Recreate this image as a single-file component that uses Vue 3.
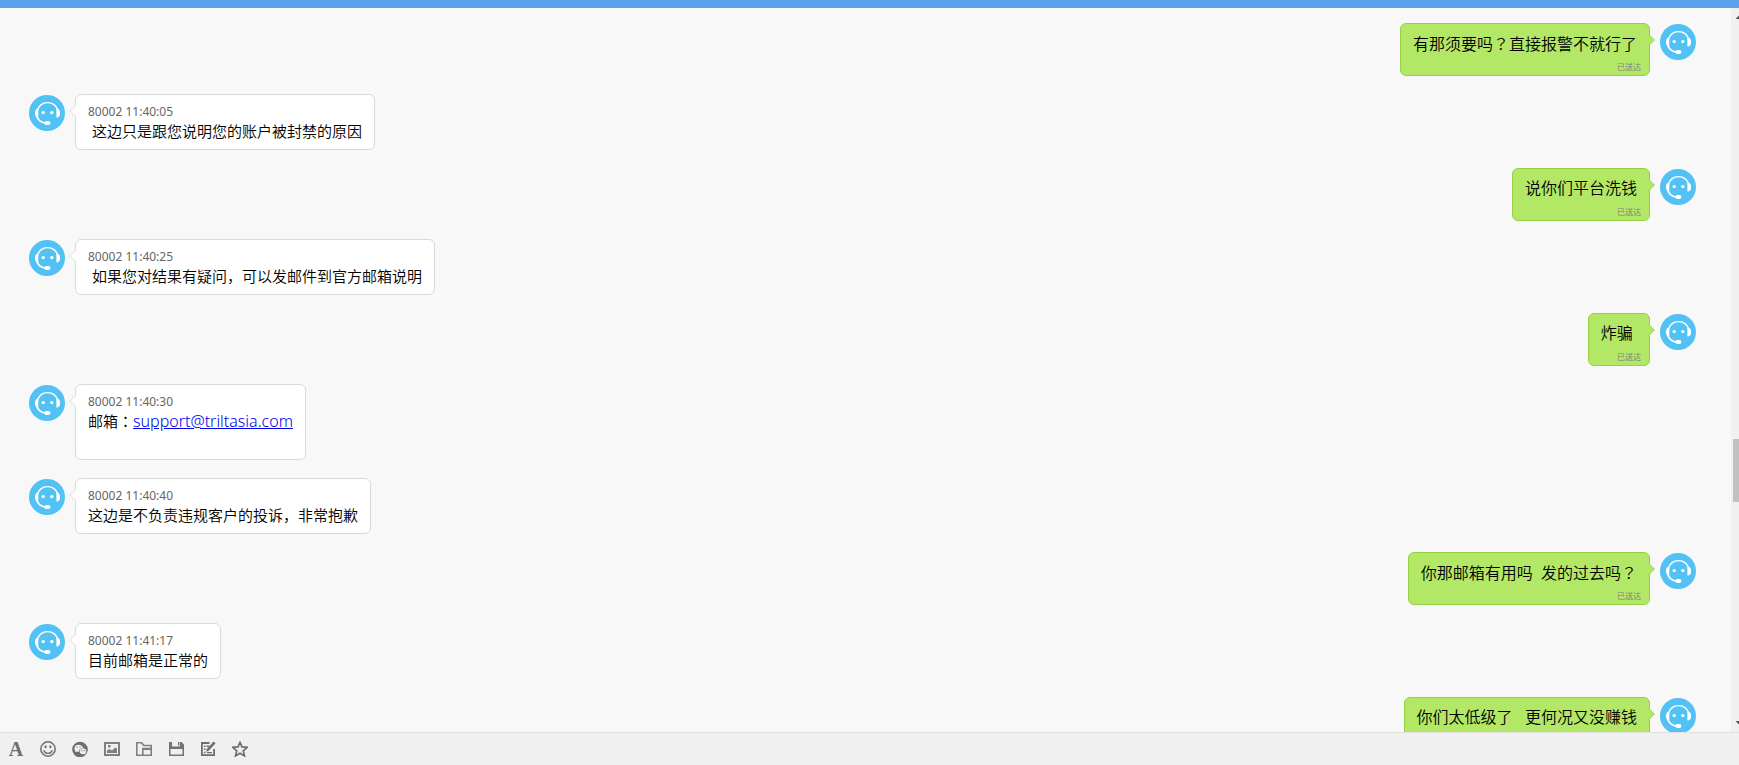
<template>
  <div class="chat">
    <header class="top-bar"></header>

    <div class="body">
      <main class="messages">
        <div v-for="msg in messages" :key="msg.id" class="row" :class="{ mine: msg.mine }">
          <svg class="avatar" viewBox="0 0 36 36" aria-hidden="true">
            <circle cx="18" cy="18" r="18" fill="#52c1f3" />
            <g fill="none" stroke="#fff" stroke-linecap="round">
              <path d="M8.4 16C9.2 10.8 13.4 7.6 18.6 7.6S28 10.8 28.8 16" stroke-width="1.4" />
              <path d="M7.8 21.500C9.200 25 12.600 27.600 17 28.200" stroke-width="1.800" />
            </g>
            <g fill="#fff">
              <path d="M9.3 13.4v9.2C7 22.6 6 20.8 6 18s1-4.6 3.3-4.6z" />
              <path d="M27.4 13.4c2.7 0 3.7 1.800 3.700 4.600s-1 4.600-3.700 4.600z" />
              <circle cx="14.2" cy="17.6" r="1.7" />
              <circle cx="22.8" cy="17.6" r="1.7" />
              <rect x="15.4" y="26" width="6" height="4" rx="2" />
            </g>
          </svg>

          <div class="bubble">
            <p v-if="!msg.mine" class="meta">{{ msg.from }} {{ msg.time }}</p>
            <p class="text"><span v-for="(part, i) in splitMarks(msg.text)" :key="i" :class="{ mark: i % 2 }">{{ part }}</span><a v-if="msg.mail" :href="'mailto:' + msg.mail">{{ msg.mail }}</a></p>
            <p v-if="msg.mail" class="text"></p>
            <p v-if="msg.delivered" class="status">已送达</p>
          </div>
        </div>
      </main>

      <div class="scrollbar" aria-hidden="true">
        <svg class="arrow" viewBox="0 0 17 17"><path d="M4.5 11l4-4 4 4z" fill="#505050" /></svg>
        <div :style="{ flexGrow: scrolled }"></div>
        <div class="thumb"></div>
        <div :style="{ flexGrow: 100 - scrolled }"></div>
        <svg class="arrow" viewBox="0 0 17 17"><path d="M4.5 6l4 4 4-4z" fill="#505050" /></svg>
      </div>
    </div>

    <footer class="toolbar">
      <button type="button" aria-label="字体" class="font">A</button>
      <button type="button" aria-label="表情">
        <svg viewBox="0 0 16 16">
          <circle cx="8" cy="8" r="7.2" fill="none" stroke="#6e6e6e" stroke-width="1.5" />
          <ellipse cx="5.6" cy="5.8" rx="1.1" ry="1.5" />
          <ellipse cx="10.4" cy="5.8" rx="1.1" ry="1.5" />
          <path d="M3.8 9.2c1.2 4.2 7.2 4.2 8.4 0" fill="none" stroke="#6e6e6e" stroke-width="1.4" />
        </svg>
      </button>
      <button type="button" aria-label="微信表情">
        <svg viewBox="0 0 16 16">
          <circle cx="8" cy="8.5" r="7.8" />
          <path d="M2.400 7.400C2.400 5.200 4.200 3.800 6.500 3.800s4.200 1.300 4.500 3.200C8.500 7 6.800 8.600 6.900 10.700c-.9.1-1.600 0-2.300-.2L3 11.300l.3-1.500c-.6-.6-.9-1.500-.9-2.400z" fill="#f0f0f0" />
          <path d="M7.600 10.300c0-1.800 1.600-3 3.400-3s3.300 1.300 3.300 3c0 .9-.4 1.600-1.100 2.200l.2 1.200-1.200-.6c-2.500.6-4.600-.7-4.600-2.800z" fill="#f0f0f0" />
          <circle cx="5" cy="6.200" r=".6" />
          <circle cx="8" cy="6" r=".6" />
          <circle cx="9.800" cy="9.700" r=".6" />
          <circle cx="12.200" cy="9.700" r=".6" />
        </svg>
      </button>
      <button type="button" aria-label="图片">
        <svg viewBox="0 0 16 16" fill="#808080">
          <path d="M0 1h16v14H0zM2 3v10h12V3z" fill-rule="evenodd" />
          <path d="M3 12V9.500l2.500-1.500 2.500 1.500L11 6.500l2 1V12z" />
          <rect x="4" y="4" width="2.500" height="2.500" />
        </svg>
      </button>
      <button type="button" aria-label="文件夹">
        <svg viewBox="0 0 16 16" fill="none" stroke="#808080" stroke-width="1.600">
          <path d="M6 14.200H.8V1.800h5l1.800 2.700h7.600v4" />
          <path d="M6.800 7.600h8.400v6.600H6.800z" />
          <path d="M6 8.200h10" />
        </svg>
      </button>
      <button type="button" aria-label="保存">
        <svg viewBox="0 0 16 16">
          <path d="M1 1h12.500L16 3.500V15H1zM4 1v4.500h8V1zM2.500 8v5.500h12V8z" fill-rule="evenodd" fill="#737373" />
          <rect x="10" y="1" width="1.300" height="3.500" />
        </svg>
      </button>
      <button type="button" aria-label="评价">
        <svg viewBox="0 0 16 16">
          <path d="M9.500 2H1.900v12.200h12.200V8" fill="none" stroke="#6e6e6e" stroke-width="1.800" />
          <path d="M13.600.5l2 1.800-6.800 7.500-2.900 1 .9-2.800z" />
          <path d="M4 4.500h1.500V6H4zM4 7.500h1.500V9H4zM4 10.700h1.500v1.500H4zM6.500 4.500H9V6H6.500zM7 11h5v1.300H7z" />
        </svg>
      </button>
      <button type="button" aria-label="收藏">
        <svg viewBox="0 0 16 16">
          <path d="M8 1.400l2 4.500 5.200.5-3.900 3.500 1.200 5L8 12.200l-4.500 2.700 1.200-5L.8 6.400 6 5.900z" fill="none" stroke="#6e6e6e" stroke-width="1.700" />
        </svg>
      </button>
    </footer>
  </div>
</template>

<script setup>
import { ref } from 'vue'

const scrolled = ref(66)

const messages = ref([
  { id: 1, mine: true, delivered: true, text: '有那须要吗？直接报警不就行了' },
  { id: 2, from: '80002', time: '11:40:05', text: ' 这边只是跟您说明您的账户被封禁的原因' },
  { id: 3, mine: true, delivered: true, text: '说你们平台洗钱' },
  { id: 4, from: '80002', time: '11:40:25', text: ' 如果您对结果有疑问，可以发邮件到官方邮箱说明' },
  { id: 5, mine: true, delivered: true, text: '炸骗 ' },
  { id: 6, from: '80002', time: '11:40:30', text: '邮箱：', mail: 'support@triltasia.com' },
  { id: 7, from: '80002', time: '11:40:40', text: '这边是不负责违规客户的投诉，非常抱歉' },
  { id: 8, mine: true, delivered: true, text: '你那邮箱有用吗  发的过去吗？' },
  { id: 9, from: '80002', time: '11:41:17', text: '目前邮箱是正常的' },
  { id: 10, mine: true, text: '你们太低级了   更何况又没赚钱' }
])

// odd parts are the full-width marks, which sit centred in their cell
function splitMarks(text) {
  return text.split(/([？：])/)
}
</script>

<style>
body {
  background: #f8f8f8;
}
</style>

<style scoped>
.chat {
  display: flex;
  flex-direction: column;
  height: 100vh;
  overflow: hidden;
  background: #f8f8f8;
  color: #000;
  font-family: "Noto Sans", "Noto Sans CJK SC", sans-serif;
}
.top-bar {
  flex: none;
  height: 8px;
  background: #5ba2ee;
}
.body {
  display: flex;
  flex: 1;
  min-height: 0;
}
.messages {
  display: flex;
  flex: 1;
  flex-direction: column;
  gap: 18px;
  padding: 15px 35px 0 29px;
  overflow: hidden;
}
.row {
  display: flex;
  flex: none;
  align-items: flex-start;
  gap: 10px;
}
.row.mine {
  flex-direction: row-reverse;
}
.avatar {
  flex: none;
  width: 36px;
  height: 36px;
  margin-top: 1px;
}
.bubble {
  position: relative;
  box-sizing: border-box;
  padding: 7px 0 8px;
  border: 1px solid #d9d9d9;
  border-radius: 6px;
  background: #fff;
}
/* little tail pointing at the avatar */
.bubble::before {
  content: '';
  position: absolute;
  top: 12px;
  left: -5px;
  width: 7px;
  height: 7px;
  border: 1px solid #e4e4e4;
  border-width: 0 0 1px 1px;
  background: #fff;
  transform: rotate(45deg);
}
.mine .bubble {
  min-height: 53px;
  padding: 7px 0 0;
  border-color: #96d046;
  background: #b2e866;
}
.mine .bubble::before {
  right: -4px;
  left: auto;
  border-color: #a6dc58;
  border-width: 1px 1px 0 0;
  background: #b2e866;
}
p {
  margin: 0;
}
.meta {
  height: 19px;
  padding: 0 12px;
  color: #666;
  font-size: 12px;
  line-height: 20px;
}
.text {
  height: 20px;
  padding: 0 12px;
  font-size: 15px;
  font-weight: 350;
  line-height: 20px;
  white-space: pre;
}
.text a {
  color: #0000ee;
  font-size: 16px;
  font-weight: 300;
}
.mark {
  font-family: "Noto Sans CJK JP", sans-serif;
}
.mine .text {
  height: 24px;
  font-size: 16px;
  line-height: 24px;
}
.status {
  margin-top: 4px;
  padding-right: 8px;
  color: #808080;
  font-size: 8px;
  line-height: 16px;
  text-align: right;
}
.scrollbar {
  display: flex;
  flex: none;
  flex-direction: column;
  width: 8px;
  overflow: hidden;
  background: #f0f0f0;
}
.arrow {
  flex: none;
  width: 17px;
  height: 17px;
}
.thumb {
  flex: none;
  height: 63px;
  margin-left: 2px;
  background: #c1c1c1;
}
.toolbar {
  display: flex;
  flex: none;
  gap: 16px;
  padding: 8px;
  border-top: 1px solid #e2e2e2;
  background: #f0f0f0;
}
.toolbar button {
  width: 16px;
  height: 16px;
  padding: 0;
  border: 0;
  background: none;
  cursor: pointer;
}
.toolbar svg {
  display: block;
  width: 16px;
  height: 16px;
}
.toolbar svg:not([fill]) {
  fill: #6e6e6e;
}
.toolbar .font {
  color: #6e6e6e;
  font: bold 20px/16px "Liberation Serif", serif;
}
</style>
